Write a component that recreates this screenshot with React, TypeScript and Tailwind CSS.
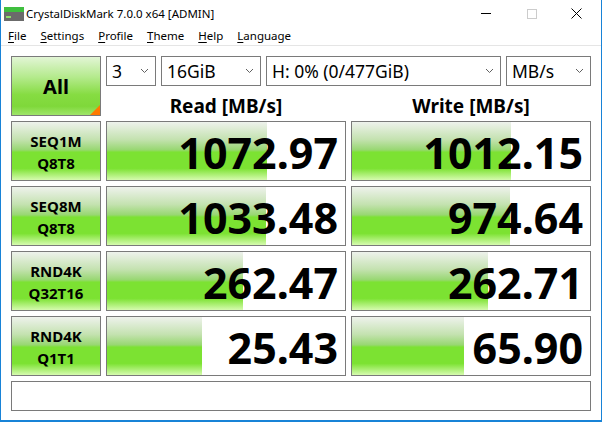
import React from 'react';

type Row = { name: string; sub: string; read: number; write: number };

const rows: Row[] = [
  { name: 'SEQ1M', sub: 'Q8T8', read: 1072.97, write: 1012.15 },
  { name: 'SEQ8M', sub: 'Q8T8', read: 1033.48, write: 974.64 },
  { name: 'RND4K', sub: 'Q32T16', read: 262.47, write: 262.71 },
  { name: 'RND4K', sub: 'Q1T1', read: 25.43, write: 65.9 },
];

const greenGlass =
  'bg-[linear-gradient(to_bottom,#eef2ec_0%,#c4e2b0_30%,#98d772_48%,#7ce232_52%,#7ce232_80%,#d6fbaf_100%)]';

// bar length follows a log scale, like the original meter
const barWidth = (v: number) => Math.round((238 * Math.log10(v * 10)) / 6);

function Chevron() {
  return (
    <svg width="9" height="6" viewBox="0 0 9 6" className="shrink-0">
      <polyline points="1,1 4.5,4.5 8,1" fill="none" stroke="#606060" strokeWidth="1" />
    </svg>
  );
}

function Combo({ label, w }: { label: string; w: string }) {
  return (
    <div className={`${w} h-[30px] border border-[#7a7a7a] bg-white flex items-center justify-between pl-[5px] pr-[6px]`}>
      <span className="text-[17.5px] leading-none text-black pt-[2px]">{label}</span>
      <Chevron />
    </div>
  );
}

function Meter({ value }: { value: number }) {
  return (
    <div className="relative h-[60px] border border-[#7a7a7a] bg-white overflow-hidden">
      <div className={`absolute left-0 top-0 bottom-0 ${greenGlass}`} style={{ width: barWidth(value) }} />
      <div className="relative h-full flex items-center justify-end pr-[7px] pt-[3px]">
        <span className="text-[43px] font-bold leading-none text-black">{value.toFixed(2)}</span>
      </div>
    </div>
  );
}

function Menu({ first, rest }: { first: string; rest: string }) {
  return (
    <span className="px-[7px]">
      <span className="underline underline-offset-2">{first}</span>
      {rest}
    </span>
  );
}

export default function App() {
  return (
    <div className="w-[602px] h-[422px] bg-white border-x border-b-2 border-[#1883d7] flex flex-col font-['Noto_Sans','Open_Sans',sans-serif] text-black overflow-hidden">
      {/* Title bar */}
      <div className="h-[27px] flex items-center">
        <svg width="20" height="14" viewBox="0 0 20 14" className="ml-[3px] mr-[2px] mt-[1px]">
          <rect x="0" y="0" width="20" height="5" fill="#3fbf3f" />
          <rect x="0" y="5" width="20" height="9" fill="#6b6b6b" />
          <rect x="2" y="9" width="5" height="2" fill="#8de06a" />
        </svg>
        <span className="text-[11.5px] leading-none">CrystalDiskMark 7.0.0 x64 [ADMIN]</span>
        <div className="ml-auto flex items-center h-full">
          <div className="w-[46px] h-full flex items-center justify-center">
            <div className="w-[10px] h-px bg-black" />
          </div>
          <div className="w-[46px] h-full flex items-center justify-center">
            <div className="w-[10px] h-[10px] border border-[#cccccc]" />
          </div>
          <div className="w-[46px] h-full flex items-center justify-center pr-[4px]">
            <svg width="11" height="11" viewBox="0 0 11 11">
              <path d="M0.5 0.5 L10.5 10.5 M10.5 0.5 L0.5 10.5" stroke="#000" strokeWidth="1" />
            </svg>
          </div>
        </div>
      </div>

      {/* Menu bar */}
      <div className="h-[18px] flex items-center text-[11.5px] leading-none">
        <Menu first="F" rest="ile" />
        <Menu first="S" rest="ettings" />
        <Menu first="P" rest="rofile" />
        <Menu first="T" rest="heme" />
        <Menu first="H" rest="elp" />
        <Menu first="L" rest="anguage" />
      </div>
      <div className="h-px bg-[#e5e5e5]" />

      {/* Main grid */}
      <div className="pt-[10px] px-[10px] grid grid-cols-[90px_240px_240px] gap-[5px]">
        <div className="relative h-[60px] border border-[#7a7a7a] bg-[linear-gradient(to_bottom,#e2f5d5_0%,#b4ea8c_35%,#86dc42_65%,#7fd83a_85%,#9fe56a_100%)] flex items-center justify-center">
          <span className="text-[20px] font-bold leading-none pt-[1px]">All</span>
          <div className="absolute right-0 bottom-0 w-0 h-0 border-l-[10px] border-l-transparent border-b-[10px] border-b-[#ff7a00]" />
        </div>

        <div className="col-span-2 flex flex-col">
          <div className="flex gap-[5px]">
            <Combo label="3" w="w-[50px]" />
            <Combo label="16GiB" w="w-[100px]" />
            <Combo label="H: 0% (0/477GiB)" w="w-[235px]" />
            <Combo label="MB/s" w="w-[85px]" />
          </div>
          <div className="grid grid-cols-2 gap-[5px] h-[30px]">
            <div className="flex items-center justify-center text-[19px] font-bold leading-none pt-[10px]">Read [MB/s]</div>
            <div className="flex items-center justify-center text-[19px] font-bold leading-none pt-[10px]">Write [MB/s]</div>
          </div>
        </div>

        {rows.map((r, i) => (
          <React.Fragment key={i}>
            <div className={`h-[60px] border border-[#7a7a7a] ${greenGlass} flex flex-col items-center justify-center gap-[7px] text-[15px] font-bold leading-none pt-[2px]`}>
              <span>{r.name}</span>
              <span>{r.sub}</span>
            </div>
            <Meter value={r.read} />
            <Meter value={r.write} />
          </React.Fragment>
        ))}

        <div className="col-span-3 h-[30px] border border-[#7a7a7a] bg-white" />
      </div>
    </div>
  );
}
